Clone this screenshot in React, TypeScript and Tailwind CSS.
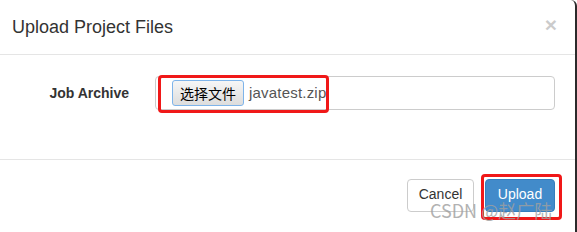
import React from "react";

// Bootstrap-style "Upload Project Files" modal
export default function App() {
	return (
		<div className="relative h-[232px] w-[577px] overflow-hidden bg-white font-['Liberation_Sans',Arial,sans-serif] text-[#333]">
			<div className="flex h-[232px] w-[577px] flex-col rounded-tr-[6px] border-r-2 border-[#2b2b2b]">
				{/* Header */}
				<div className="flex h-[55px] shrink-0 items-start justify-between border-b border-[#e5e5e5] pl-[12px] pr-[18px] pt-[15px]">
					<h4 className="text-[18px] leading-[24px] text-[#333]">Upload Project Files</h4>
					<span className="mt-[-2px] text-[21px] font-bold leading-[24px] text-black opacity-20">×</span>
				</div>

				{/* Body */}
				<div className="flex h-[105px] shrink-0 items-start border-b border-[#e5e5e5] pt-[21px]">
					<label className="w-[130px] pr-[1px] pt-[7px] text-right text-[14px] font-bold leading-[20px] text-[#333]">
						Job Archive
					</label>
					<div className="ml-[25px] flex h-[34px] w-[400px] items-center rounded-[4px] border border-[#ccc] pl-[16px]">
						<button className="h-[26px] w-[72px] rounded-[3px] border border-[#7eb4ea] bg-gradient-to-b from-[#f6f6f6] to-[#dddddd] font-['Noto_Sans_CJK_SC',sans-serif] text-[14px] leading-[22px] text-black">
							选择文件
						</button>
						<span className="ml-[5px] text-[15px] tracking-[0.2px] text-[#555]">javatest.zip</span>
					</div>
				</div>

				{/* Footer */}
				<div className="flex justify-end gap-[11px] pr-[20px] pt-[19px]">
					<button className="h-[33px] w-[67px] rounded-[4px] border border-[#ccc] bg-white pb-[2px] text-[14px] text-[#333]">
						Cancel
					</button>
					<button className="h-[33px] w-[70px] rounded-[4px] border border-[#357ebd] bg-[#428bca] pb-[2px] text-[14px] text-white">
						Upload
					</button>
				</div>
			</div>

			{/* red annotation boxes */}
			<div className="absolute left-[158px] top-[75px] h-[38px] w-[171px] rounded-[4px] border-[3px] border-[#f01818]" />
			<div className="absolute left-[481px] top-[174px] h-[46px] w-[81px] rounded-[4px] border-[3px] border-[#f01818]" />

			{/* watermark */}
			<div className="absolute left-[430px] top-[198px] font-['Noto_Sans_CJK_SC',sans-serif] text-[18px] leading-[24px] text-[#a0a0a0] opacity-80">
				CSDN @赵广陆
			</div>
		</div>
	);
}
